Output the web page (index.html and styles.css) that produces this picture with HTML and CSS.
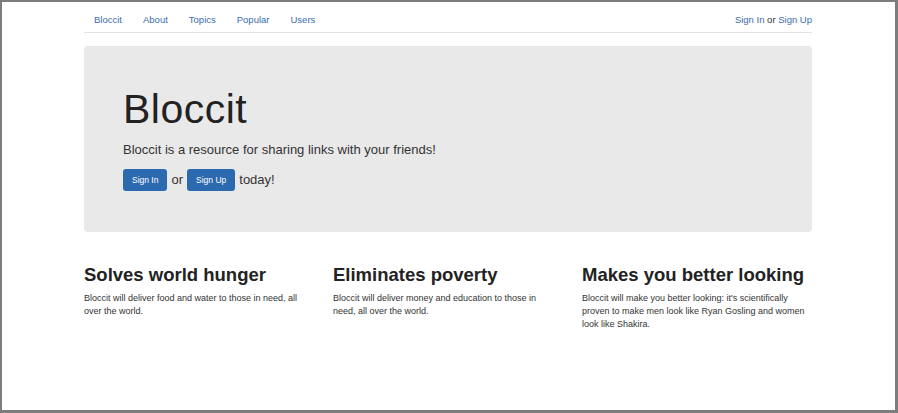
FILE: index.html
```html
<!DOCTYPE html>
<html>
<head>
<meta charset="utf-8">
<link rel="stylesheet" href="styles.css">
</head>
<body>
<div class="frame">
  <div class="container">
    <nav class="nav">
      <ul class="nav-links">
        <li><a href="#">Bloccit</a></li>
        <li><a href="#">About</a></li>
        <li><a href="#">Topics</a></li>
        <li><a href="#">Popular</a></li>
        <li><a href="#">Users</a></li>
      </ul>
      <div class="nav-auth"><a href="#">Sign In</a> or <a href="#">Sign Up</a></div>
    </nav>
    <section class="jumbotron">
      <h1 class="title">Bloccit</h1>
      <p class="lead">Bloccit is a resource for sharing links with your friends!</p>
      <p class="cta"><a class="btn" href="#">Sign In</a> or <a class="btn" href="#">Sign Up</a> today!</p>
    </section>
    <section class="features">
      <div class="feature">
        <h2>Solves world hunger</h2>
        <p>Bloccit will deliver food and water to those in need, all over the world.</p>
      </div>
      <div class="feature">
        <h2>Eliminates poverty</h2>
        <p>Bloccit will deliver money and education to those in need, all over the world.</p>
      </div>
      <div class="feature">
        <h2>Makes you better looking</h2>
        <p>Bloccit will make you better looking: it's scientifically proven to make men look like Ryan Gosling and women look like Shakira.</p>
      </div>
    </section>
  </div>
</div>
</body>
</html>
```
FILE: styles.css
```css
* { box-sizing: border-box; }
html, body { margin: 0; padding: 0; }
body {
  font-family: "Liberation Sans", Arial, Helvetica, sans-serif;
  color: #333;
  background: #fff;
}
.frame {
  width: 898px;
  height: 413px;
  border-style: solid;
  border-color: #7d7d7d;
  border-width: 2px 3px 3px 2px;
  padding-right: 1px;
  overflow: hidden;
}
.container {
  width: 728px;
  margin: 0 auto;
}
.nav {
  display: flex;
  justify-content: space-between;
  align-items: flex-start;
  height: 31px;
  padding-top: 12px;
  border-bottom: 1px solid #e3e3e3;
  font-size: 9.5px;
  line-height: 12px;
}
.nav a { color: #3a6db0; text-decoration: none; }
.nav-links {
  display: flex;
  list-style: none;
  margin: 0;
  padding: 0;
}
.nav-links li { padding: 0 10.5px; }
.nav-links li:first-child { padding-left: 10px; }
.nav-auth { color: #333; }
.jumbotron {
  margin-top: 13px;
  background: #e9e9e9;
  border-radius: 4px;
  height: 186px;
  padding: 41px 39px 0;
}
.title {
  margin: 0;
  font-size: 41px;
  letter-spacing: 0.5px;
  font-weight: normal;
  line-height: 1.1;
  color: #222;
}
.lead {
  margin: 10px 0 0;
  font-size: 13px;
  line-height: 1.3;
  color: #333;
}
.cta {
  margin: 10px 0 0;
  font-size: 13px;
  display: flex;
  align-items: center;
  gap: 4px;
}
.btn {
  display: inline-flex;
  align-items: center;
  justify-content: center;
  height: 22px;
  padding: 0 9px;
  background: #2c6aaf;
  border-radius: 3px;
  color: #fff;
  font-size: 8.5px;
  text-decoration: none;
}
.features {
  display: grid;
  grid-template-columns: repeat(3, 226px);
  column-gap: 23px;
  padding-top: 32px;
}
.feature h2 {
  margin: 0;
  font-size: 18.5px;
  font-weight: bold;
  color: #222;
  line-height: 1.2;
}
.feature p {
  margin: 6px 0 0;
  font-size: 9px;
  line-height: 13px;
  color: #333;
}
```
